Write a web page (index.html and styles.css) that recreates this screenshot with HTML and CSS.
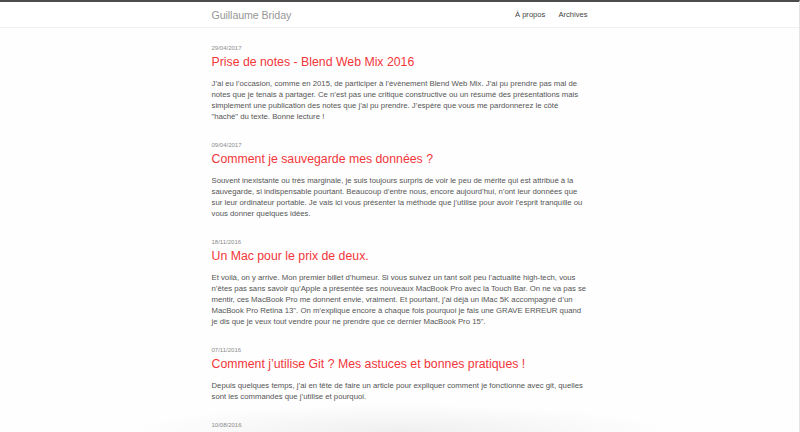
FILE: index.html
```html
<!DOCTYPE html>
<html lang="fr">
<head>
<meta charset="utf-8">
<title>Guillaume Briday</title>
<link rel="stylesheet" href="styles.css">
</head>
<body>
<div class="page">
  <header class="site-header">
    <div class="wrap header-inner">
      <a class="brand" href="#">Guillaume Briday</a>
      <nav class="nav">
        <a href="#">À propos</a>
        <a href="#">Archives</a>
      </nav>
    </div>
  </header>
  <main class="wrap posts">
    <article class="post">
      <div class="date">29/04/2017</div>
      <h2 class="title"><a href="#">Prise de notes - Blend Web Mix 2016</a></h2>
      <p class="excerpt">J’ai eu l’occasion, comme en 2015, de participer à l’évènement Blend Web Mix. J’ai pu prendre pas mal de notes que je tenais à partager. Ce n’est pas une critique constructive ou un résumé des présentations mais simplement une publication des notes que j’ai pu prendre. J’espère que vous me pardonnerez le côté "haché"&nbsp;du texte. Bonne lecture !</p>
    </article>
    <article class="post">
      <div class="date">09/04/2017</div>
      <h2 class="title"><a href="#">Comment je sauvegarde mes données ?</a></h2>
      <p class="excerpt">Souvent inexistante ou très marginale, je suis toujours surpris de voir le peu de mérite qui est attribué à la sauvegarde, si indispensable pourtant. Beaucoup d’entre nous, encore aujourd’hui, n’ont leur données que sur leur ordinateur portable. Je vais ici vous présenter la méthode que j’utilise pour avoir l’esprit tranquille ou vous donner quelques idées.</p>
    </article>
    <article class="post">
      <div class="date">18/11/2016</div>
      <h2 class="title"><a href="#">Un Mac pour le prix de deux.</a></h2>
      <p class="excerpt">Et voilà, on y arrive. Mon premier billet d’humeur. Si vous suivez un tant soit peu l’actualité high-tech, vous n’êtes pas sans savoir qu’Apple a présentée ses nouveaux MacBook Pro avec la Touch Bar. On ne va pas se mentir, ces MacBook Pro me donnent envie, vraiment. Et pourtant, j’ai déjà un iMac 5K accompagné d’un MacBook Pro Retina 13". On m’explique encore à chaque fois pourquoi je fais une GRAVE ERREUR quand je dis que je veux tout vendre pour ne prendre que ce dernier MacBook Pro 15".</p>
    </article>
    <article class="post">
      <div class="date">07/11/2016</div>
      <h2 class="title"><a href="#">Comment j’utilise Git ? Mes astuces et bonnes pratiques !</a></h2>
      <p class="excerpt">Depuis quelques temps, j’ai en tête de faire un article pour expliquer comment je fonctionne avec git, quelles sont les commandes que j’utilise et pourquoi.</p>
    </article>
    <article class="post">
      <div class="date">10/08/2016</div>
    </article>
  </main>
  <div class="bottom-fade"></div>
</div>
</body>
</html>
```

FILE: styles.css
```css
html, body {
  margin: 0;
  padding: 0;
  background: #fefefe;
  font-family: "Liberation Sans", Arial, sans-serif;
}

.page {
  height: 432px;
  overflow: hidden;
  border-top: 2px solid #4d4d4d;
  border-right: 1px solid #e4e4e4;
  box-sizing: border-box;
  position: relative;
}

.wrap {
  width: 376px;
  margin: 0 auto;
}

.site-header {
  height: 25px;
  background: #fff;
  border-bottom: 1px solid #f1f1f1;
}

.header-inner {
  height: 100%;
  display: flex;
  align-items: center;
  justify-content: space-between;
}

.brand {
  font-size: 10.7px;
  font-weight: 300;
  color: #979797;
  text-decoration: none;
  letter-spacing: -0.1px;
}

.nav {
  display: flex;
  gap: 13px;
}

.nav a {
  font-size: 7.6px;
  color: #444;
  text-decoration: none;
}

.posts {
  padding-top: 16px;
}

.post {
  margin-bottom: 19.5px;
}

.date {
  font-size: 6px;
  line-height: 8px;
  color: #8c8c8c;
}

.title {
  margin: 3px 0 0;
  font-size: 12.3px;
  line-height: 15px;
  font-weight: normal;
}

.title a {
  color: #f2363a;
  text-decoration: none;
}

.excerpt {
  margin: 7.5px 0 0;
  font-size: 7.76px;
  line-height: 11px;
  color: #555;
}

.bottom-fade {
  position: absolute;
  left: 0;
  right: 0;
  bottom: 0;
  height: 34px;
  background: radial-gradient(ellipse 270px 28px at 50% 100%, rgba(0, 0, 0, 0.06), rgba(0, 0, 0, 0));
  pointer-events: none;
}
```
